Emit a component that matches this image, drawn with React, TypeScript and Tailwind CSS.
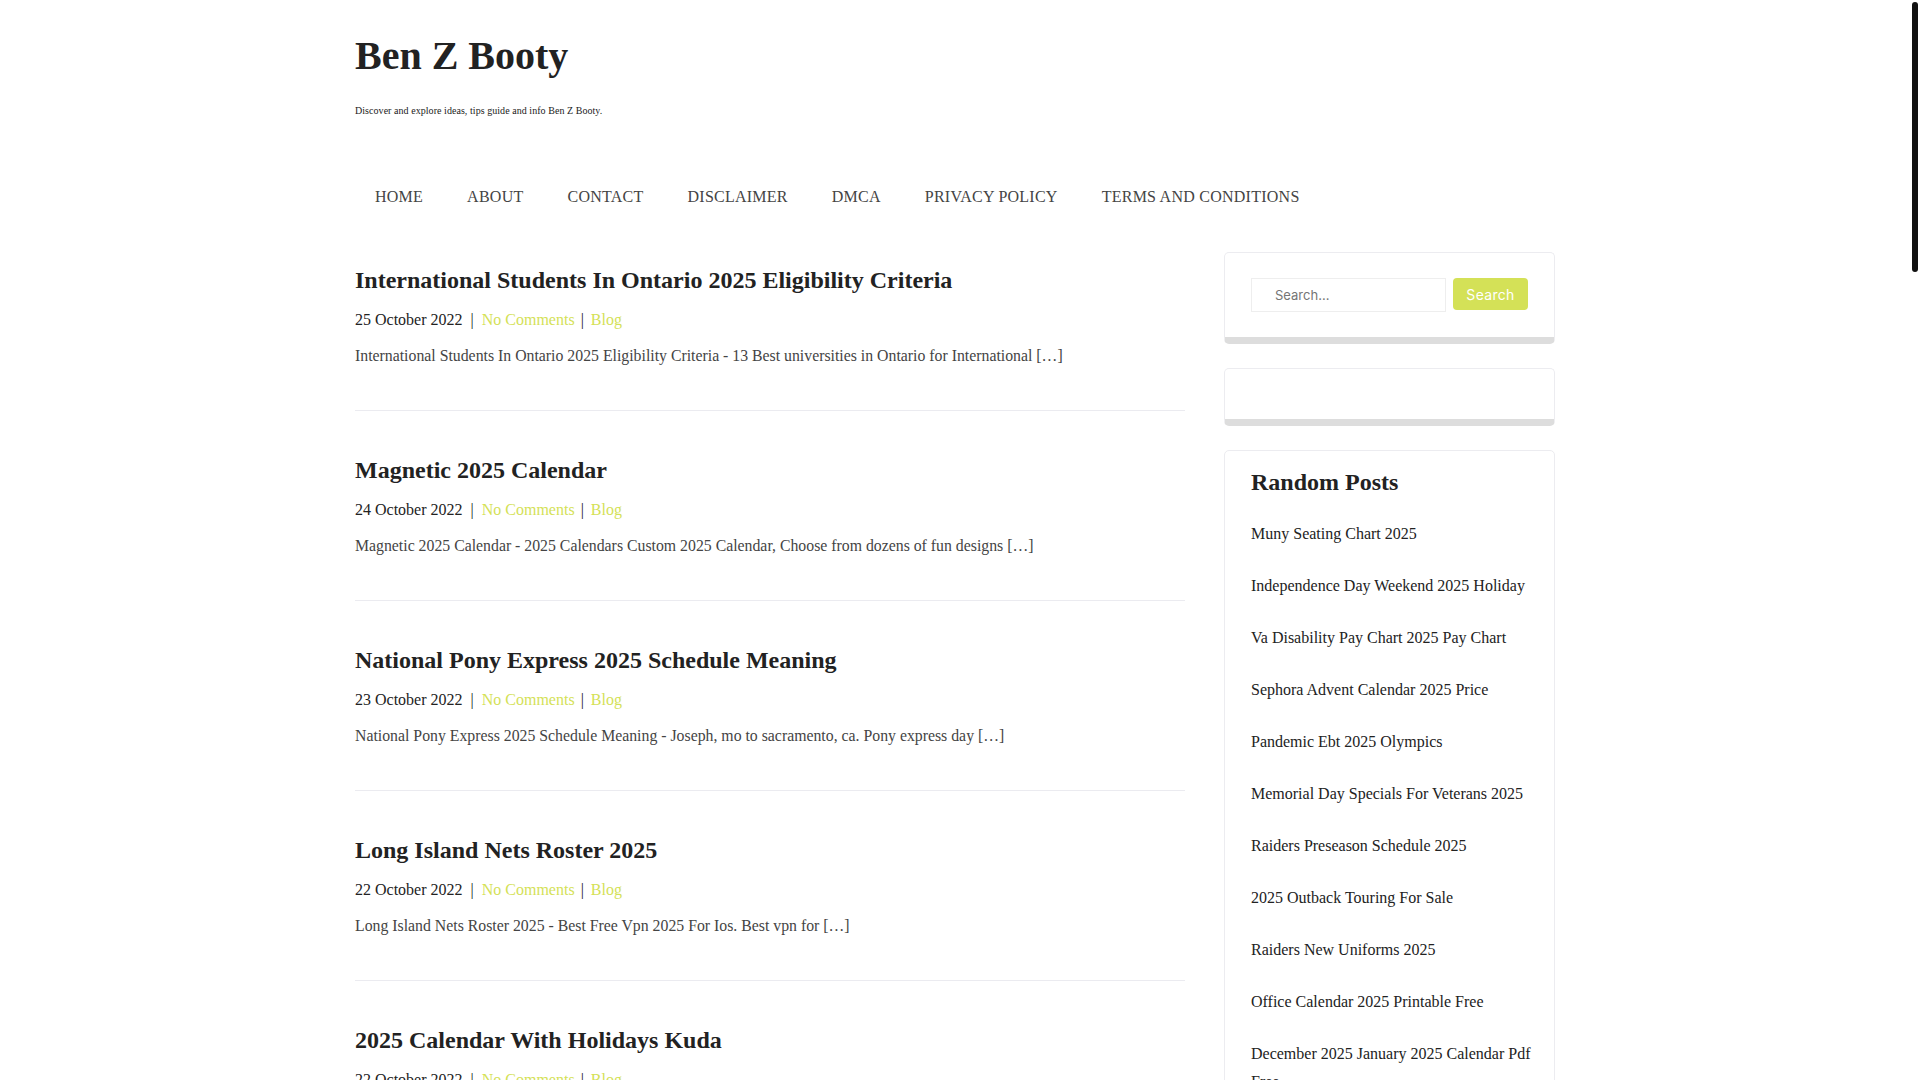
import React from "react";

const posts = [
  {
    title: "International Students In Ontario 2025 Eligibility Criteria",
    date: "25 October 2022",
    excerpt:
      "International Students In Ontario 2025 Eligibility Criteria - 13 Best universities in Ontario for International […]",
  },
  {
    title: "Magnetic 2025 Calendar",
    date: "24 October 2022",
    excerpt:
      "Magnetic 2025 Calendar - 2025 Calendars Custom 2025 Calendar, Choose from dozens of fun designs […]",
  },
  {
    title: "National Pony Express 2025 Schedule Meaning",
    date: "23 October 2022",
    excerpt:
      "National Pony Express 2025 Schedule Meaning - Joseph, mo to sacramento, ca. Pony express day […]",
  },
  {
    title: "Long Island Nets Roster 2025",
    date: "22 October 2022",
    excerpt:
      "Long Island Nets Roster 2025 - Best Free Vpn 2025 For Ios. Best vpn for […]",
  },
  {
    title: "2025 Calendar With Holidays Kuda",
    date: "22 October 2022",
    excerpt:
      "2025 Calendar With Holidays Kuda - Free printable 2025 calendar with holidays […]",
  },
];

const randomPosts = [
  "Muny Seating Chart 2025",
  "Independence Day Weekend 2025 Holiday",
  "Va Disability Pay Chart 2025 Pay Chart",
  "Sephora Advent Calendar 2025 Price",
  "Pandemic Ebt 2025 Olympics",
  "Memorial Day Specials For Veterans 2025",
  "Raiders Preseason Schedule 2025",
  "2025 Outback Touring For Sale",
  "Raiders New Uniforms 2025",
  "Office Calendar 2025 Printable Free",
  "December 2025 January 2025 Calendar Pdf Free",
];

const nav = [
  "HOME",
  "ABOUT",
  "CONTACT",
  "DISCLAIMER",
  "DMCA",
  "PRIVACY POLICY",
  "TERMS AND CONDITIONS",
];

export default function App() {
  return (
    <div className="bg-white pr-[10px] font-['Liberation_Serif','Times_New_Roman',serif] text-[#222]">
      <div className="mx-auto min-h-[4257px] w-[1200px]">
        <header className="pt-[32px]">
          <h1 className="text-[40px] font-bold leading-[48px] text-[#222]">
            Ben Z Booty
          </h1>
          <p className="mt-[23px] text-[10px] leading-[15px] tracking-[0.05px] text-[#1a1a1a]">
            Discover and explore ideas, tips guide and info Ben Z Booty.
          </p>
          <nav className="mt-[67px] -ml-[2px] flex">
            {nav.map((n) => (
              <a
                key={n}
                href="#"
                className="px-[22px] text-[16px] leading-6 tracking-[0.25px] text-[#444]"
              >
                {n}
              </a>
            ))}
          </nav>
        </header>

        <div className="mt-[43px] flex justify-between">
          <main className="w-[830px]">
            {posts.map((p, i) => (
              <article
                key={i}
                className={`border-b border-[#ebebf0] pb-[42px] ${
                  i === 0 ? "pt-[13px]" : "pt-[44px]"
                }`}
              >
                <h2 className="mb-[13px] text-[24px] font-bold leading-[30px] text-[#222]">
                  <a href="#">{p.title}</a>
                </h2>
                <div className="mb-3 flex text-[16px] leading-6">
                  <span className="text-[#222]">{p.date}</span>
                  <span className="mx-2 text-[#222]">|</span>
                  <a href="#" className="text-[#d4e157]">
                    No Comments
                  </a>
                  <span className="ml-[6px] mr-[7px] text-[#222]">|</span>
                  <a href="#" className="text-[#d4e157]">
                    Blog
                  </a>
                </div>
                <p className="text-[15.8px] leading-6 text-[#444]">{p.excerpt}</p>
              </article>
            ))}
          </main>

          <aside className="w-[331px]">
            <div className="mb-6 rounded-[5px] border border-[#ececf0] border-b-[7px] border-b-[#dddddd] px-[26px] py-[25px]">
              <form className="flex items-start gap-[7px]">
                <input
                  type="text"
                  placeholder="Search..."
                  className="h-[34px] w-[195px] border border-[#eeeeee] pl-[23px] font-['Inter',sans-serif] text-[13px] text-[#333] outline-none placeholder:text-[#757575]"
                />
                <button
                  type="button"
                  className="h-[32px] w-[76px] rounded-[4px] bg-[#d4e157] font-['Inter',sans-serif] text-[14px] tracking-[0.3px] text-white"
                >
                  Search
                </button>
              </form>
            </div>

            <div className="mb-6 h-[58px] rounded-[5px] border border-[#ececf0] border-b-[7px] border-b-[#dddddd]"></div>

            <div className="rounded-[5px] border border-[#ececf0] pb-[25px] pl-[26px] pr-[20px] pt-[17px]">
              <h3 className="mb-[12px] text-[24px] font-bold leading-[28px] text-[#222]">
                Random Posts
              </h3>
              <ul>
                {randomPosts.map((r) => (
                  <li key={r} className="py-3 text-[16px] leading-[28px] text-[#222]">
                    <a href="#">{r}</a>
                  </li>
                ))}
              </ul>
            </div>
          </aside>
        </div>
      </div>
      <div className="fixed right-[2px] top-[2px] h-[270px] w-[6px] rounded-full bg-[#111]"></div>
    </div>
  );
}
